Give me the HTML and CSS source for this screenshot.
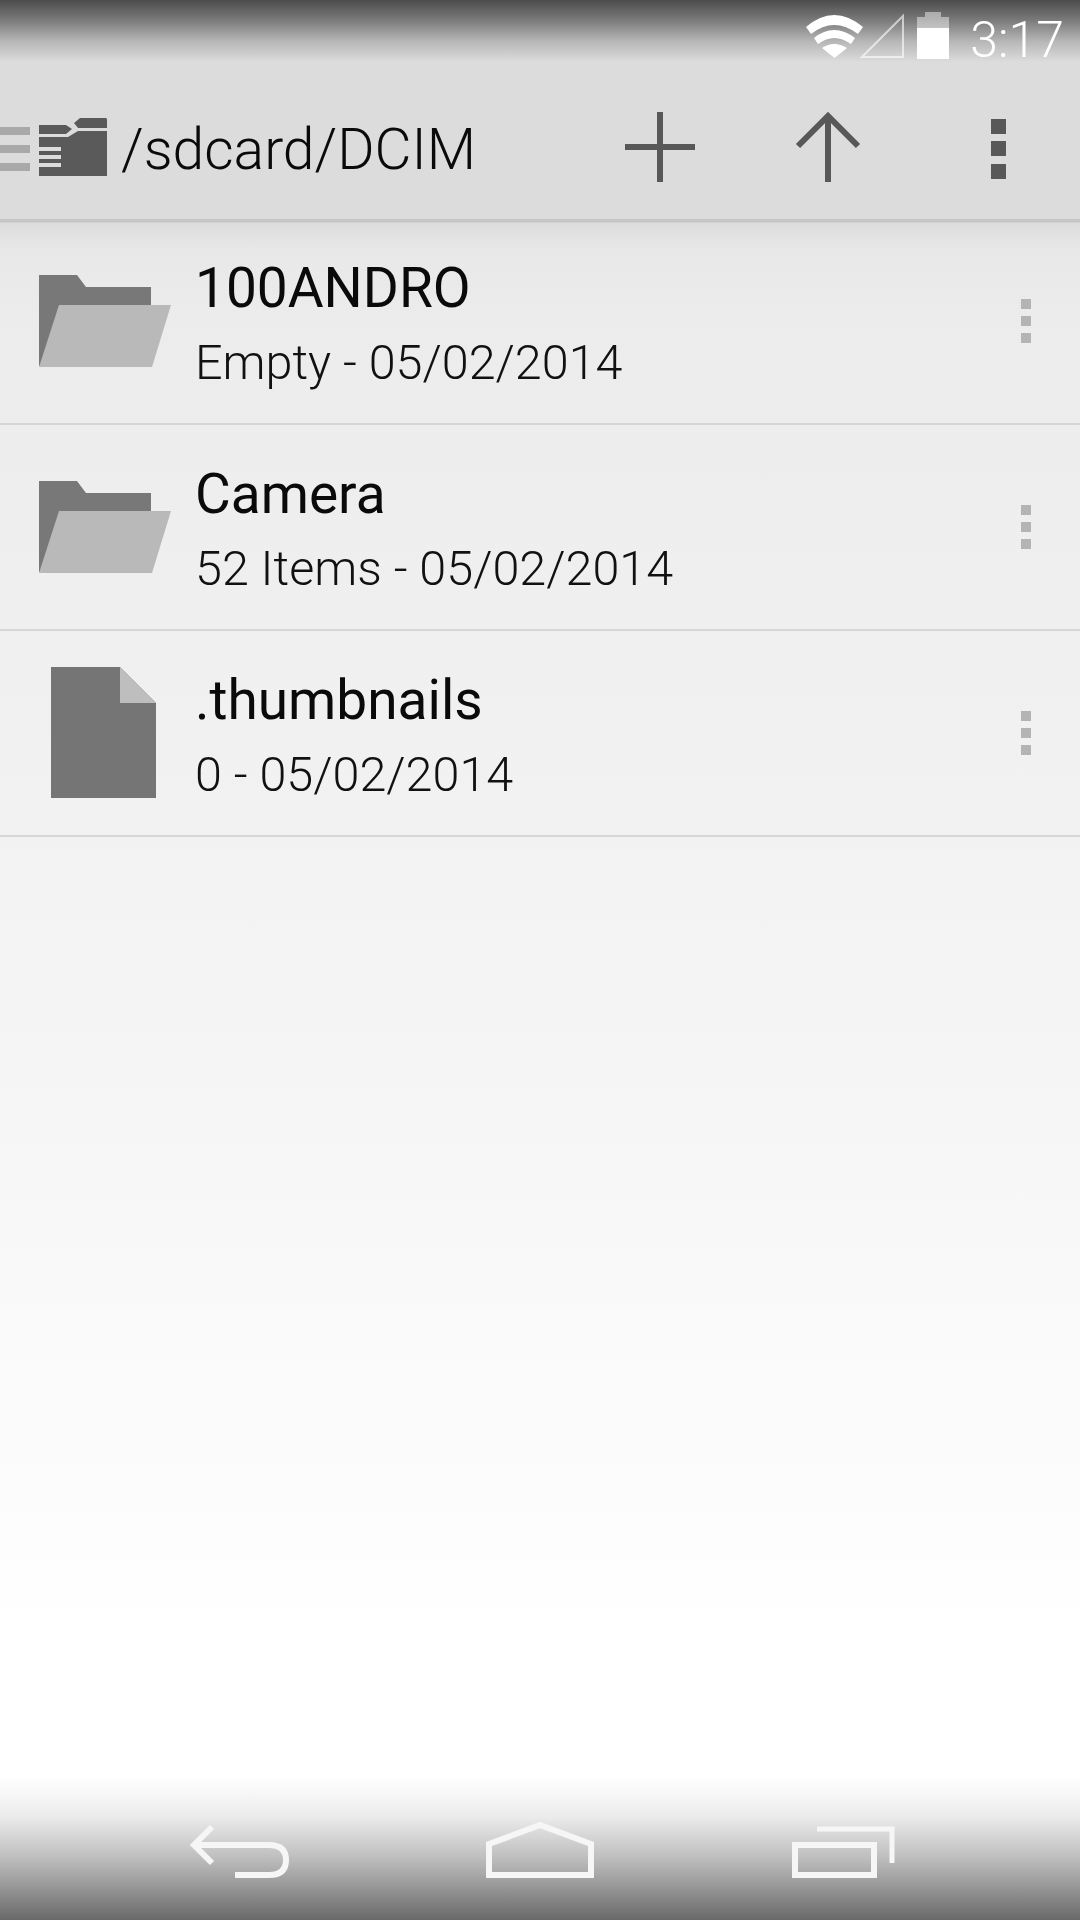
FILE: index.html
```html
<!DOCTYPE html>
<html lang="en">
<head>
    <meta charset="UTF-8">
    <meta name="viewport" content="width=device-width, initial-scale=1.0">
    <title>/sdcard/DCIM</title>
    <link rel="stylesheet" href="styles.css">
</head>
<body>
    <svg class="defs" width="0" height="0">
        <symbol id="folder" viewBox="0 0 132 92">
            <path fill="#787878" d="M0 0H38L47 12H112V91H0Z"/>
            <path fill="#b9b9b9" d="M20 30H132L113 92H0Z"/>
        </symbol>
        <symbol id="file" viewBox="0 0 106 132">
            <path fill="#757575" d="M0 0H69L105 36V131H0Z"/>
            <path fill="#bebebe" d="M69 0L105 36H69Z"/>
        </symbol>
        <symbol id="row-menu" viewBox="0 0 10 44">
            <path fill="#b4b4b4" d="M0 0H10V10H0ZM0 17H10V27H0ZM0 34H10V44H0Z"/>
        </symbol>
    </svg>

    <!-- Status bar -->
    <div class="status-bar">
        <svg class="status-icons" width="155" height="50" viewBox="0 0 155 50">
            <path fill="#fff" d="M5 17Q33-7 62 17L57 24Q33 6 10 24Z"/>
            <path fill="#fff" d="M13 28Q33 12 54 28L50 34Q33 22 17 34Z"/>
            <path fill="#fff" d="M21 38Q33 30 46 38L33.5 48Z"/>
            <path fill="none" stroke="#fff" stroke-opacity=".6" stroke-width="2" d="M61 47L102 6V47Z"/>
            <path fill="#fff" fill-opacity=".45" d="M124 2H140V7H148V18H116V7H124Z"/>
            <path fill="#fff" d="M116 18H148V49H116Z"/>
        </svg>
        <span class="clock">3:17</span>
    </div>

    <!-- Toolbar -->
    <header class="toolbar">
        <svg class="logo" width="107" height="58" viewBox="0 0 107 58">
            <path fill="#a9a9a9" d="M0 9H30V17H0ZM0 27H30V35H0ZM0 45H30V53H0Z"/>
            <path fill="#5a5a5a" d="M39 7H66L72 11L66 16H39ZM74 5L80 0H106Q107 0 107 2V10H78ZM39 19H68L78 13H107V58H39V49H61V45H39V41H61V37H39V33H61V29H39Z"/>
        </svg>
        <h1 class="path">/sdcard/DCIM</h1>
        <div class="actions">
            <svg width="168" height="80" viewBox="0 0 168 80">
                <path fill="none" stroke="#585858" stroke-width="6" d="M84 5V75M49 40H119"/>
            </svg>
            <svg width="168" height="80" viewBox="0 0 168 80">
                <path fill="none" stroke="#585858" stroke-width="6" d="M84 9V75M54 39L84 9L114 39"/>
            </svg>
            <svg width="168" height="80" viewBox="0 0 168 80">
                <path fill="#585858" d="M79 12H94V27H79ZM79 34H94V49H79ZM79 57H94V72H79Z"/>
            </svg>
        </div>
    </header>

    <!-- File list -->
    <main class="file-list">
        <div class="file-row">
            <div class="file-icon"><svg width="132" height="92"><use href="#folder"/></svg></div>
            <div class="file-text">
                <div class="file-name">100ANDRO</div>
                <div class="file-meta">Empty - 05/02/2014</div>
            </div>
            <svg class="row-menu" width="10" height="44"><use href="#row-menu"/></svg>
        </div>
        <div class="file-row">
            <div class="file-icon"><svg width="132" height="92"><use href="#folder"/></svg></div>
            <div class="file-text">
                <div class="file-name">Camera</div>
                <div class="file-meta">52 Items - 05/02/2014</div>
            </div>
            <svg class="row-menu" width="10" height="44"><use href="#row-menu"/></svg>
        </div>
        <div class="file-row">
            <div class="file-icon file-icon-doc"><svg width="106" height="132"><use href="#file"/></svg></div>
            <div class="file-text">
                <div class="file-name">.thumbnails</div>
                <div class="file-meta">0 - 05/02/2014</div>
            </div>
            <svg class="row-menu" width="10" height="44"><use href="#row-menu"/></svg>
        </div>
    </main>

    <!-- Navigation bar -->
    <nav class="nav-bar">
        <svg width="306" height="60" viewBox="0 0 306 60">
            <path fill="none" stroke="#f6f6f6" stroke-width="6" d="M131 7L113 25L131 43M113 25H188Q205 25 205 40Q205 55 188 55H154"/>
        </svg>
        <svg width="306" height="60" viewBox="0 0 306 60">
            <path fill="none" stroke="#f6f6f6" stroke-width="6" d="M102 24L153 5L204 24V55H102Z"/>
        </svg>
        <svg width="306" height="60" viewBox="0 0 306 60">
            <path fill="none" stroke="#f6f6f6" stroke-width="6" d="M102 25H181V55H102Z"/>
            <path fill="none" stroke="#f6f6f6" stroke-width="5" d="M124 9H199V43"/>
        </svg>
    </nav>
</body>
</html>
```

FILE: styles.css
```css
* {
    margin: 0;
    padding: 0;
    box-sizing: border-box;
}

body {
    width: 1080px;
    height: 1920px;
    display: flex;
    flex-direction: column;
    overflow: hidden;
    font-family: Roboto, "Liberation Sans", sans-serif;
    background-color: #fff;
    color: #0a0a0a;
}

.defs {
    position: absolute;
}

.status-bar {
    height: 62px;
    flex: none;
    display: flex;
    align-items: flex-start;
    justify-content: flex-end;
    padding: 10px 16px 0 0;
    background: linear-gradient(#4c4c4c 0, #7a7a7a 20px, #b8b8b8 42px, #dcdcdc 62px);
}

.status-icons {
    margin-right: 14px;
}

.clock {
    margin-top: 1px;
    font-size: 50px;
    font-weight: 300;
    line-height: 58px;
    color: #fff;
}

.toolbar {
    height: 157px;
    flex: none;
    display: flex;
    align-items: center;
    padding-top: 13px;
    background-color: #dcdcdc;
}

.logo {
    flex: none;
}

.path {
    margin: 5px 0 0 14px;
    font-size: 57px;
    font-weight: 300;
    line-height: 64px;
    flex: 1;
}

.actions {
    display: flex;
    flex: none;
}

.file-list {
    flex: 1;
    background: linear-gradient(#c6c6c6 0, #c6c6c6 3px, #dcdcdc 4px, #e8e8e8 30px, #ececec 100px, #f3f3f3 700px, #fbfbfb 1200px, #fff 1420px);
}

.file-row {
    height: 206px;
    display: flex;
    align-items: center;
    border-bottom: 2px solid #d6d6d6;
}

.file-icon {
    width: 195px;
    flex: none;
    padding-left: 39px;
    display: flex;
}

.file-icon-doc {
    padding-left: 51px;
}

.file-text {
    flex: 1;
    padding-top: 5px;
}

.file-name {
    font-size: 55px;
    line-height: 68px;
}

.file-meta {
    margin-top: 11px;
    font-size: 48.5px;
    font-weight: 300;
    line-height: 60px;
    color: #111;
}

.row-menu {
    flex: none;
    margin-right: 49px;
}

.nav-bar {
    height: 144px;
    flex: none;
    display: flex;
    justify-content: center;
    padding-top: 44px;
    background: linear-gradient(#fff 0, #ececec 40px, #c0c0c0 80px, #989898 110px, #696969 144px);
}
```
